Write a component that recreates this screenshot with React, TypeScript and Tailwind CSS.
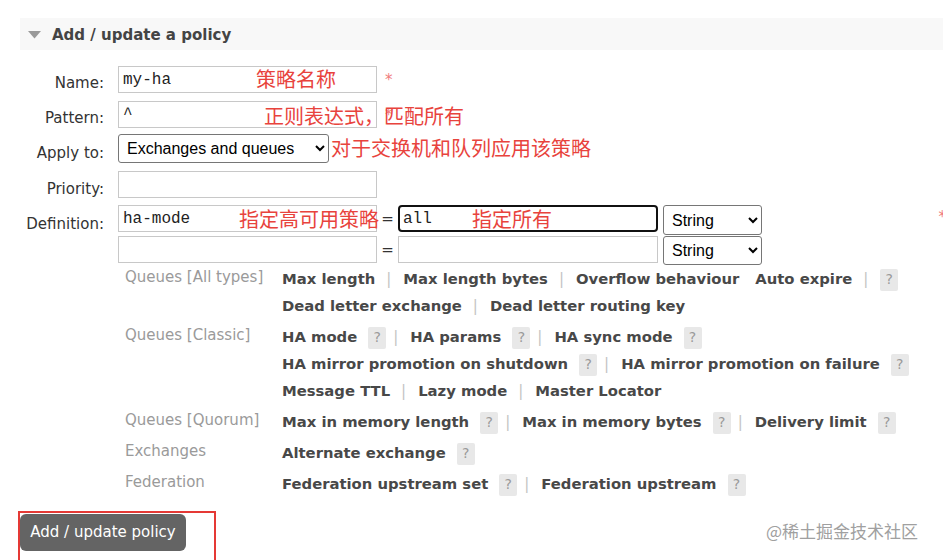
import React from "react"

type Tok = string

const groups: { label: string; lines: Tok[][] }[] = [
    {
        label: "Queues [All types]",
        lines: [
            ["Max length", "|", "Max length bytes", "|", "Overflow behaviour", "_", "Auto expire", "|", "?"],
            ["Dead letter exchange", "|", "Dead letter routing key"],
        ],
    },
    {
        label: "Queues [Classic]",
        lines: [
            ["HA mode", "?", "|", "HA params", "?", "|", "HA sync mode", "?"],
            ["HA mirror promotion on shutdown", "?", "|", "HA mirror promotion on failure", "?"],
            ["Message TTL", "|", "Lazy mode", "|", "Master Locator"],
        ],
    },
    {
        label: "Queues [Quorum]",
        lines: [["Max in memory length", "?", "|", "Max in memory bytes", "?", "|", "Delivery limit", "?"]],
    },
    {
        label: "Exchanges",
        lines: [["Alternate exchange", "?"]],
    },
    {
        label: "Federation",
        lines: [["Federation upstream set", "?", "|", "Federation upstream", "?"]],
    },
]

const HelpLine = ({ toks }: { toks: Tok[] }) => (
    <div className="flex h-[27px] items-center whitespace-nowrap">
        {toks.map((t, i) => {
            const prev = toks[i - 1]
            if (t === "?") {
                return (
                    <span
                        key={i}
                        className={`${prev === "|" ? "ml-0" : "ml-[11px]"} inline-flex h-[22px] w-[18px] items-center justify-center rounded-[2px] bg-[#e8e8e8] text-[14px] font-normal text-[#9a9a9a]`}
                    >
                        ?
                    </span>
                )
            }
            if (t === "|") {
                return (
                    <span
                        key={i}
                        className={`${prev === "?" ? "ml-[7px]" : "ml-[11px]"} mr-[12px] font-normal text-[#c4c4c4]`}
                    >
                        |
                    </span>
                )
            }
            if (t === "_") return <span key={i} className="w-[16px]" />
            return (
                <span key={i} className="text-[14.8px] font-bold text-[#484848]">
                    {t}
                </span>
            )
        })}
    </div>
)

const Label = ({ text, pt }: { text: string; pt: string }) => (
    <div className={`w-[104px] shrink-0 text-right text-[15px] leading-[18px] text-[#333] ${pt}`}>{text}</div>
)

const Note = ({ text, className }: { text: string; className: string }) => (
    <span
        className={`pointer-events-none absolute whitespace-nowrap text-[20px] leading-[24px] text-[#e8433d] ${className}`}
        style={{ fontFamily: "'Noto Sans CJK SC', sans-serif" }}
    >
        {text}
    </span>
)

const inputCls =
    "h-[27px] border border-[#c8c8c8] bg-white px-[4px] text-[16px] text-[#222] outline-none font-['Liberation_Mono',monospace]"

const selectCls =
    "rounded-[3px] border border-[#767676] bg-white pl-[4px] text-[16px] text-black outline-none font-['Liberation_Sans',Arial,sans-serif]"

export default function App() {
    return (
        <div className="relative h-[560px] w-[943px] overflow-hidden bg-white font-['DejaVu_Sans',Verdana,sans-serif]">
            {/* section header */}
            <div className="pl-5 pt-[18px]">
                <div className="flex h-[32px] items-center bg-[#f8f8f8] pl-[8px] pt-[2px]">
                    <svg width="13" height="8" viewBox="0 0 13 8">
                        <path d="M0 0 H13 L6.5 7.5 Z" fill="#9a9a9a" />
                    </svg>
                    <span className="ml-[11px] text-[15px] font-bold text-[#444]">Add / update a policy</span>
                </div>
            </div>

            {/* form */}
            <div className="mt-[16px]">
                <div className="flex h-[27px] items-start">
                    <Label text="Name:" pt="pt-[8px]" />
                    <div className="relative ml-[14px] flex items-start">
                        <input className={`${inputCls} w-[259px]`} defaultValue="my-ha" />
                        <span className="ml-[8px] mt-[3px] text-[15px] text-[#f07c7c]">*</span>
                        <Note text="策略名称" className="left-[138px] top-[1px]" />
                    </div>
                </div>

                <div className="mt-[8px] flex h-[27px] items-start">
                    <Label text="Pattern:" pt="pt-[8px]" />
                    <div className="relative ml-[14px] flex items-start">
                        <input className={`${inputCls} w-[259px]`} defaultValue="^" />
                        <span className="ml-[8px] mt-[3px] text-[15px] text-[#f07c7c]">*</span>
                        <Note text="正则表达式，匹配所有" className="left-[146px] top-[3px]" />
                    </div>
                </div>

                <div className="mt-[6px] flex h-[29px] items-start">
                    <Label text="Apply to:" pt="pt-[10px]" />
                    <div className="relative ml-[14px] flex items-start">
                        <select className={`${selectCls} h-[29px] w-[211px]`} defaultValue="eq">
                            <option value="eq">Exchanges and queues</option>
                            <option value="e">Exchanges</option>
                            <option value="q">Queues</option>
                        </select>
                        <Note text="对于交换机和队列应用该策略" className="left-[213px] top-[2px]" />
                    </div>
                </div>

                <div className="mt-[8px] flex h-[27px] items-start">
                    <Label text="Priority:" pt="pt-[9px]" />
                    <div className="ml-[14px]">
                        <input className={`${inputCls} w-[259px]`} />
                    </div>
                </div>

                <div className="mt-[7px] flex h-[30px] items-start">
                    <Label text="Definition:" pt="pt-[10px]" />
                    <div className="relative ml-[14px] flex items-start">
                        <input className={`${inputCls} w-[259px]`} defaultValue="ha-mode" />
                        <span className="w-[21px] pt-[3px] text-center text-[15px] text-[#333]">=</span>
                        <input
                            className="h-[27px] w-[260px] rounded-[4px] border-2 border-[#111] bg-white px-[3px] text-[16px] text-[#222] outline-none font-['Liberation_Mono',monospace]"
                            defaultValue="all"
                        />
                        <select className={`${selectCls} ml-[5px] h-[30px] w-[99px]`} defaultValue="s">
                            <option value="s">String</option>
                            <option value="n">Number</option>
                            <option value="b">Boolean</option>
                            <option value="l">List</option>
                        </select>
                        <Note text="指定高可用策略" className="left-[121px] top-[2px]" />
                        <Note text="指定所有" className="left-[354px] top-[2px]" />
                    </div>
                    <span className="ml-auto mr-[-3px] mt-[1px] text-[15px] text-[#f07c7c]">*</span>
                </div>

                <div className="mt-[1px] flex h-[29px] items-start">
                    <div className="w-[104px] shrink-0" />
                    <div className="ml-[14px] flex items-start">
                        <input className={`${inputCls} w-[259px]`} />
                        <span className="w-[21px] pt-[3px] text-center text-[15px] text-[#333]">=</span>
                        <input className={`${inputCls} w-[260px]`} />
                        <select className={`${selectCls} ml-[5px] h-[29px] w-[99px]`} defaultValue="s">
                            <option value="s">String</option>
                            <option value="n">Number</option>
                        </select>
                    </div>
                </div>

                {/* argument help */}
                <div className="ml-[125px] mt-[1px] flex flex-col gap-[4px] text-[15px]">
                    {groups.map((g) => (
                        <div key={g.label} className="flex">
                            <div className="w-[157px] shrink-0 leading-[22px] text-[#9a9a9a]">{g.label}</div>
                            <div>
                                {g.lines.map((l, i) => (
                                    <HelpLine key={i} toks={l} />
                                ))}
                            </div>
                        </div>
                    ))}
                </div>

                {/* submit, boxed in red */}
                <div className="ml-[18px] mt-[13px] h-[52px] w-[198px] border-2 border-[#e53935] pt-[1px]">
                    <button className="h-[37px] w-[166px] rounded-[6px] bg-[#646464] text-[15px] text-white">
                        Add / update policy
                    </button>
                </div>
            </div>

            <span
                className="absolute left-[766px] top-[519px] text-[17px] leading-[24px] text-[#a0a0a0]"
                style={{ fontFamily: "'Noto Sans CJK SC', sans-serif" }}
            >
                @稀土掘金技术社区
            </span>
        </div>
    )
}
